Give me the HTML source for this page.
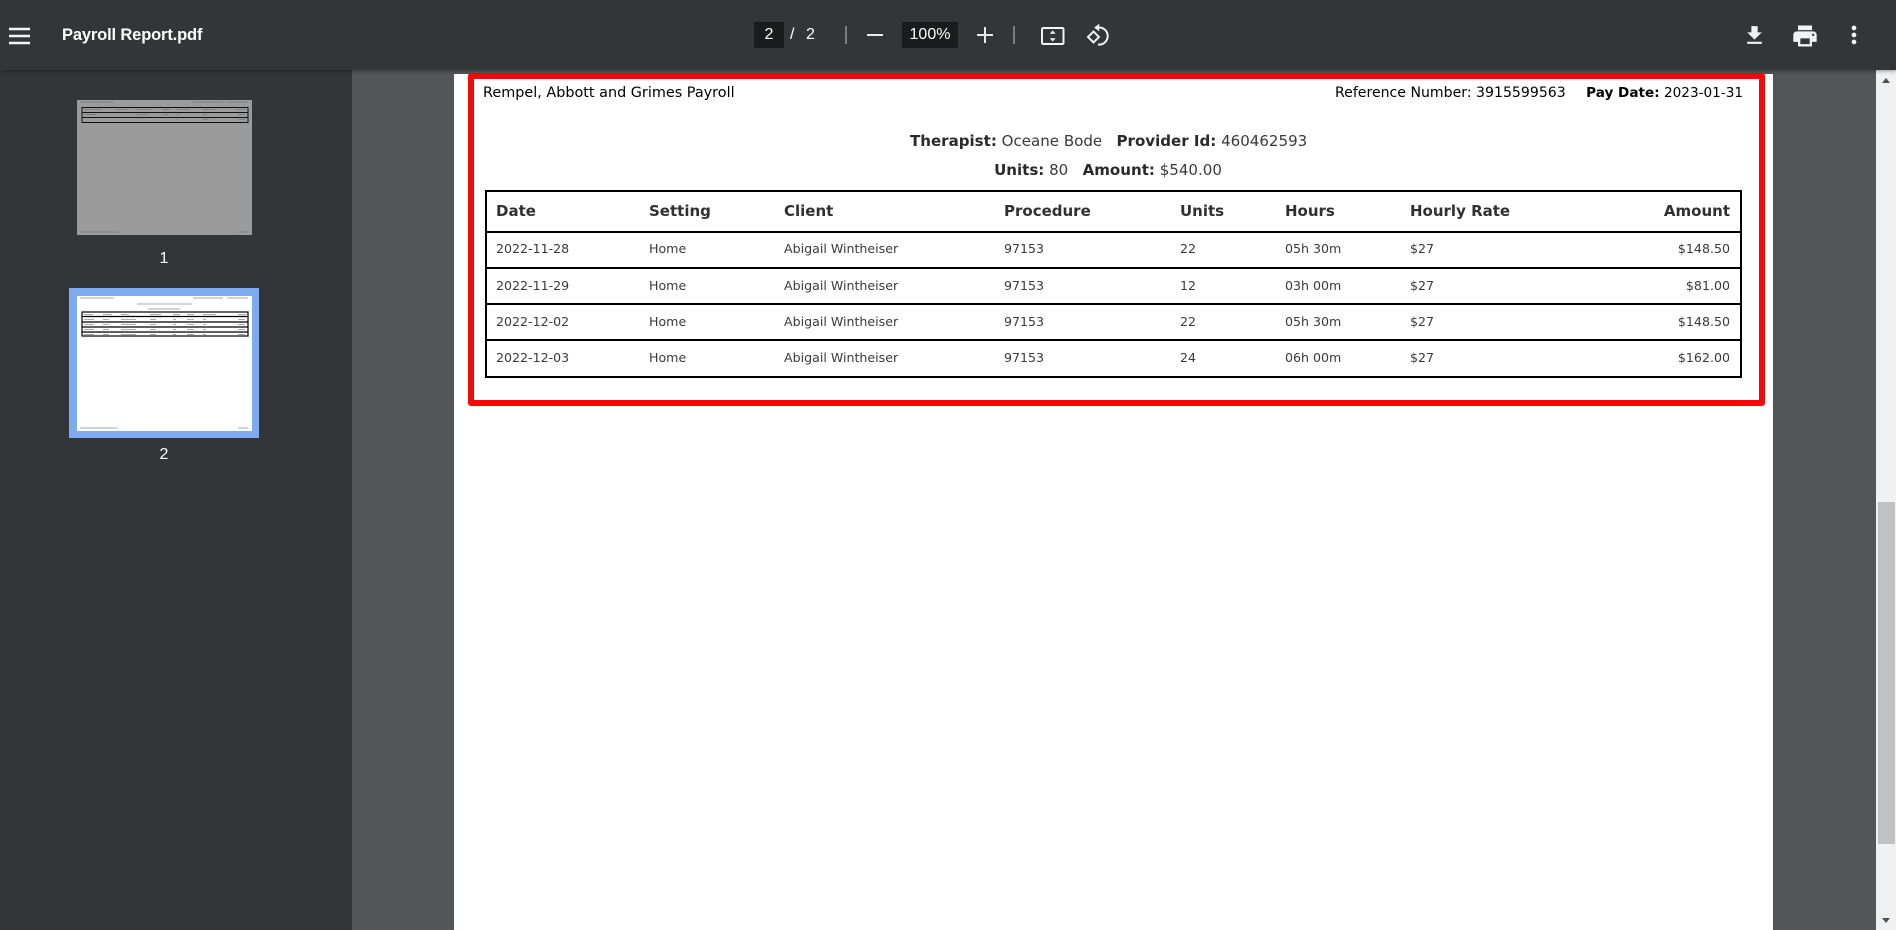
<!DOCTYPE html>
<html>
<head>
<meta charset="utf-8">
<style>
html,body{margin:0;padding:0;width:1896px;height:930px;overflow:hidden;background:#525659}
body{position:relative;font-family:"DejaVu Sans",sans-serif;color:#212529}
.a{position:absolute;white-space:nowrap}
#bar{position:absolute;left:0;top:0;width:1896px;height:70px;background:#323639;box-shadow:0 1px 4px rgba(0,0,0,.4);z-index:5}
#side{position:absolute;left:0;top:70px;width:352px;height:860px;background:#323639}
#page{position:absolute;left:454px;top:74px;width:1319px;height:856px;background:#fff}
#red{position:absolute;left:468px;top:73px;width:1297px;height:333px;box-sizing:border-box;border:6px solid #f00a0a;border-radius:3px}
.bx{position:absolute;background:#191b1c;height:26px;top:22px;color:#fff;text-align:center;font:16px/26px "Liberation Sans",sans-serif}
.t{color:#fff;font-family:"Liberation Sans",sans-serif}
.h{font-size:15px;font-weight:bold;line-height:20px;color:#303030}
.r{font-size:12.6px;line-height:18px;color:#3a3a3a}
.l{position:absolute;left:486px;width:1255px;height:2px;background:#000}
.lb{font-size:14.1px;line-height:20px;color:#000}
.m{font-size:15.05px;line-height:20px;color:#3a3a3a}
b{color:#2a2a2a}
svg{position:absolute;overflow:visible}
</style>
</head>
<body>
<div id="side"></div>
<div id="page"></div>
<div id="red"></div>

<div class="a lb" style="left:483px;top:83px;font-size:14.4px">Rempel, Abbott and Grimes Payroll</div>
<div class="a lb" style="left:1335px;top:83px">Reference Number: 3915599563</div>
<div class="a lb" style="right:153px;top:83px;font-size:13.6px"><b style="color:#000">Pay Date:</b> 2023-01-31</div>
<div class="a m" style="left:910px;width:396px;text-align:center;top:131px"><b>Therapist:</b> Oceane Bode &nbsp;&nbsp;<b>Provider Id:</b> 460462593</div>
<div class="a m" style="left:910px;width:396px;text-align:center;top:160px"><b>Units:</b> 80 &nbsp;&nbsp;<b>Amount:</b> $540.00</div>

<div style="position:absolute;left:485px;top:190px;width:1257px;height:188px;box-sizing:border-box;border:2px solid #000"></div>
<div class="l" style="top:231px"></div>
<div class="l" style="top:267px"></div>
<div class="l" style="top:303px"></div>
<div class="l" style="top:339px"></div>

<div class="a h" style="left:496px;top:201px">Date</div>
<div class="a h" style="left:649px;top:201px">Setting</div>
<div class="a h" style="left:784px;top:201px">Client</div>
<div class="a h" style="left:1004px;top:201px">Procedure</div>
<div class="a h" style="left:1180px;top:201px">Units</div>
<div class="a h" style="left:1285px;top:201px">Hours</div>
<div class="a h" style="left:1410px;top:201px">Hourly Rate</div>
<div class="a h" style="right:166px;top:201px">Amount</div>

<div class="a r" style="left:496px;top:240px">2022-11-28</div>
<div class="a r" style="left:649px;top:240px">Home</div>
<div class="a r" style="left:784px;top:240px">Abigail Wintheiser</div>
<div class="a r" style="left:1004px;top:240px">97153</div>
<div class="a r" style="left:1180px;top:240px">22</div>
<div class="a r" style="left:1285px;top:240px">05h 30m</div>
<div class="a r" style="left:1410px;top:240px">$27</div>
<div class="a r" style="right:166px;top:240px">$148.50</div>

<div class="a r" style="left:496px;top:277px">2022-11-29</div>
<div class="a r" style="left:649px;top:277px">Home</div>
<div class="a r" style="left:784px;top:277px">Abigail Wintheiser</div>
<div class="a r" style="left:1004px;top:277px">97153</div>
<div class="a r" style="left:1180px;top:277px">12</div>
<div class="a r" style="left:1285px;top:277px">03h 00m</div>
<div class="a r" style="left:1410px;top:277px">$27</div>
<div class="a r" style="right:166px;top:277px">$81.00</div>

<div class="a r" style="left:496px;top:313px">2022-12-02</div>
<div class="a r" style="left:649px;top:313px">Home</div>
<div class="a r" style="left:784px;top:313px">Abigail Wintheiser</div>
<div class="a r" style="left:1004px;top:313px">97153</div>
<div class="a r" style="left:1180px;top:313px">22</div>
<div class="a r" style="left:1285px;top:313px">05h 30m</div>
<div class="a r" style="left:1410px;top:313px">$27</div>
<div class="a r" style="right:166px;top:313px">$148.50</div>

<div class="a r" style="left:496px;top:349px">2022-12-03</div>
<div class="a r" style="left:649px;top:349px">Home</div>
<div class="a r" style="left:784px;top:349px">Abigail Wintheiser</div>
<div class="a r" style="left:1004px;top:349px">97153</div>
<div class="a r" style="left:1180px;top:349px">24</div>
<div class="a r" style="left:1285px;top:349px">06h 00m</div>
<div class="a r" style="left:1410px;top:349px">$27</div>
<div class="a r" style="right:166px;top:349px">$162.00</div>

<!-- scrollbar -->
<div style="position:absolute;left:1876px;top:70px;width:20px;height:860px;background:#f1f1f1"></div>
<div style="position:absolute;left:1878px;top:502px;width:17px;height:342px;background:#c1c1c1"></div>
<svg style="left:1876px;top:70px" width="20" height="20"><path d="M6 13h8l-4-5z" fill="#505050"/></svg>
<svg style="left:1876px;top:910px" width="20" height="20"><path d="M6 8h8l-4 5z" fill="#505050"/></svg>

<!-- thumbnails -->
<div style="position:absolute;left:69px;top:288px;width:190px;height:150px;background:#80aaf0"></div>
<svg style="left:0;top:0" width="352" height="460">
  <rect x="77" y="100" width="175" height="135" fill="#9b9b9b"/>
  <g fill="#808080">
    <rect x="80" y="101.500" width="34" height="1"/><rect x="193" y="101.500" width="30" height="1"/><rect x="227" y="101.500" width="21" height="1"/>
    <rect x="84" y="109" width="18" height="1"/><rect x="116" y="109" width="12" height="1"/><rect x="137" y="109" width="14" height="1"/><rect x="163" y="109" width="7" height="1"/><rect x="177" y="109" width="13" height="1"/><rect x="203" y="109" width="13" height="1"/><rect x="236" y="109" width="9" height="1"/>
    <rect x="84" y="114" width="12" height="1"/><rect x="137" y="114" width="11" height="1"/><rect x="163" y="114" width="5" height="1"/><rect x="177" y="114" width="3" height="1"/><rect x="203" y="114" width="3" height="1"/><rect x="238" y="114" width="7" height="1"/>
    <rect x="203" y="119" width="6" height="1"/><rect x="238" y="119" width="7" height="1"/>
    <rect x="80" y="231.500" width="38" height="1"/><rect x="238" y="231.500" width="10" height="1"/>
  </g>
  <g fill="none" stroke="#111" stroke-width="1"><rect x="82" y="107.500" width="166" height="15"/><path d="M82 112.500h166M82 117.500h166"/></g>
  <rect x="77" y="296" width="175" height="135" fill="#fff"/>
  <g fill="#aaa">
    <rect x="80" y="297.500" width="34" height="1"/><rect x="193" y="297.500" width="30" height="1"/><rect x="227" y="297.500" width="21" height="1"/>
    <rect x="137" y="303.500" width="55" height="1"/><rect x="148" y="308.500" width="32" height="1"/>
    <g><rect x="84" y="314" width="9" height="1"/><rect x="103" y="314" width="9" height="1"/><rect x="121" y="314" width="8" height="1"/><rect x="150" y="314" width="11" height="1"/><rect x="173" y="314" width="7" height="1"/><rect x="187" y="314" width="7" height="1"/><rect x="203" y="314" width="13" height="1"/><rect x="238" y="314" width="8" height="1"/></g>
    <g><rect x="84" y="319" width="10" height="1"/><rect x="103" y="319" width="6" height="1"/><rect x="121" y="319" width="15" height="1"/><rect x="150" y="319" width="6" height="1"/><rect x="173" y="319" width="3" height="1"/><rect x="187" y="319" width="7" height="1"/><rect x="203" y="319" width="3" height="1"/><rect x="238" y="319" width="7" height="1"/></g>
    <g><rect x="84" y="324" width="10" height="1"/><rect x="103" y="324" width="6" height="1"/><rect x="121" y="324" width="15" height="1"/><rect x="150" y="324" width="6" height="1"/><rect x="173" y="324" width="3" height="1"/><rect x="187" y="324" width="7" height="1"/><rect x="203" y="324" width="3" height="1"/><rect x="238" y="324" width="7" height="1"/></g>
    <g><rect x="84" y="329" width="10" height="1"/><rect x="103" y="329" width="6" height="1"/><rect x="121" y="329" width="15" height="1"/><rect x="150" y="329" width="6" height="1"/><rect x="173" y="329" width="3" height="1"/><rect x="187" y="329" width="7" height="1"/><rect x="203" y="329" width="3" height="1"/><rect x="238" y="329" width="7" height="1"/></g>
    <g><rect x="84" y="334" width="10" height="1"/><rect x="103" y="334" width="6" height="1"/><rect x="121" y="334" width="15" height="1"/><rect x="150" y="334" width="6" height="1"/><rect x="173" y="334" width="3" height="1"/><rect x="187" y="334" width="7" height="1"/><rect x="203" y="334" width="3" height="1"/><rect x="238" y="334" width="7" height="1"/></g>
    <rect x="80" y="427.500" width="38" height="1"/><rect x="238" y="427.500" width="10" height="1"/>
  </g>
  <g fill="none" stroke="#000" stroke-width="1.200"><rect x="82" y="312" width="166" height="24"/><path d="M82 316.500h166M82 322h166M82 327h166M82 332h166"/></g>
</svg>
<div class="a t" style="left:144px;width:40px;text-align:center;top:249px;font-size:16px;line-height:20px">1</div>
<div class="a t" style="left:144px;width:40px;text-align:center;top:445px;font-size:16px;line-height:20px">2</div>

<!-- toolbar -->
<div id="bar">
  <svg style="left:9px;top:27px" width="21" height="17"><path d="M0 .75h21v2.500H0zM0 7.750h21v2.500H0zM0 14.750h21v2.500H0z" fill="#f1f3f4"/></svg>
  <div class="a t" style="left:62px;top:25px;font-size:16.5px;line-height:20px;font-weight:bold;letter-spacing:-.15px">Payroll Report.pdf</div>

  <div class="bx" style="left:754px;width:30px">2</div>
  <div class="a t" style="left:790px;top:25px;font-size:16px;line-height:20px">/</div>
  <div class="a t" style="left:806px;top:25px;font-size:16px;line-height:20px">2</div>
  <div style="position:absolute;left:845px;top:26px;width:1.5px;height:18px;background:#7b7e80"></div>
  <div style="position:absolute;left:867px;top:34px;width:16px;height:2px;background:#e8eaed"></div>
  <div class="bx" style="left:902px;width:56px;top:22px">100%</div>
  <svg style="left:977px;top:27px" width="16" height="16"><path d="M0 7h16v2H0zM7 0h2v16H7z" fill="#e8eaed"/></svg>
  <div style="position:absolute;left:1013px;top:26px;width:1.5px;height:18px;background:#7b7e80"></div>

  <svg style="left:1041px;top:26px" width="24" height="20" viewBox="0 0 24 20">
    <rect x="1" y="2" width="21.500" height="16" rx="1.200" fill="none" stroke="#f1f3f4" stroke-width="2"/>
    <path d="M11.700 4.500l3 3.300h-6zM11.700 15.500l3-3.300h-6z" fill="#f1f3f4"/>
  </svg>
  <svg style="left:1085px;top:22px" width="26" height="26" viewBox="0 0 26 26">
    <path d="M8.500 9.500L14 15 8.500 20.500 3 15z" fill="none" stroke="#f1f3f4" stroke-width="2"/>
    <path d="M13 5.600c5-.6 9.700 2.900 9.700 8.400 0 5.300-4.500 9.100-9.700 8.500" fill="none" stroke="#f1f3f4" stroke-width="2"/>
    <path d="M14.200 1.800V9.400L9.200 5.600z" fill="#f1f3f4"/>
  </svg>

  <svg style="left:1742px;top:23px" width="25" height="25" viewBox="0 0 24 24"><path d="M19 9h-4V3H9v6H5l7 7 7-7zM5 18v2h14v-2H5z" fill="#f1f3f4"/></svg>
  <svg style="left:1791px;top:22px" width="28" height="28" viewBox="0 0 24 24"><path d="M19 8H5c-1.660 0-3 1.340-3 3v6h4v4h12v-4h4v-6c0-1.660-1.340-3-3-3zm-3 11H8v-5h8v5zm3-7c-.55 0-1-.45-1-1s.45-1 1-1 1 .45 1 1-.45 1-1 1zm-1-9H6v4h12V3z" fill="#f1f3f4"/></svg>
  <svg style="left:1840px;top:21px" width="28" height="28" viewBox="0 0 24 24"><path d="M12 8c1.100 0 2-.9 2-2s-.9-2-2-2-2 .9-2 2 .9 2 2 2zm0 2c-1.100 0-2 .9-2 2s.9 2 2 2 2-.9 2-2-.9-2-2-2zm0 6c-1.100 0-2 .9-2 2s.9 2 2 2 2-.9 2-2-.9-2-2-2z" fill="#f1f3f4"/></svg>
</div>
</body>
</html>
